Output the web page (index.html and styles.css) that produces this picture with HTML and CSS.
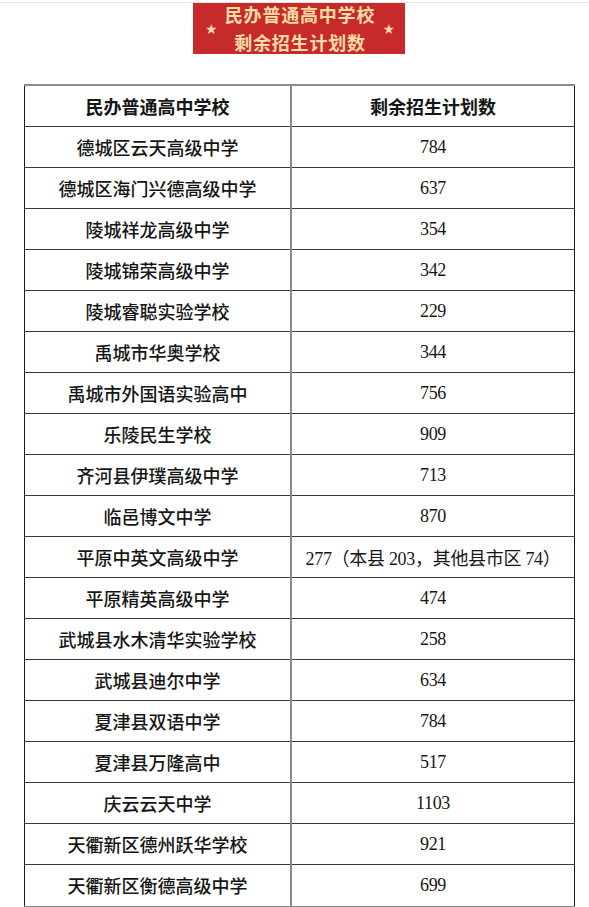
FILE: index.html
```html
<!DOCTYPE html>
<html lang="zh-CN">
<head>
<meta charset="utf-8">
<title>民办普通高中学校剩余招生计划数</title>
<link rel="stylesheet" href="styles.css">
</head>
<body>
<div class="page">
  <div class="topline"></div>
  <div class="banner">
    <span class="star">★</span>
    <div class="banner-text">
      <div>民办普通高中学校</div>
      <div>剩余招生计划数</div>
    </div>
    <span class="star">★</span>
  </div>
  <table class="plan">
    <thead>
      <tr><th class="c1">民办普通高中学校</th><th class="c2">剩余招生计划数</th></tr>
    </thead>
    <tbody>
      <tr><td class="c1">德城区云天高级中学</td><td class="c2">784</td></tr>
      <tr><td class="c1">德城区海门兴德高级中学</td><td class="c2">637</td></tr>
      <tr><td class="c1">陵城祥龙高级中学</td><td class="c2">354</td></tr>
      <tr><td class="c1">陵城锦荣高级中学</td><td class="c2">342</td></tr>
      <tr><td class="c1">陵城睿聪实验学校</td><td class="c2">229</td></tr>
      <tr><td class="c1">禹城市华奥学校</td><td class="c2">344</td></tr>
      <tr><td class="c1">禹城市外国语实验高中</td><td class="c2">756</td></tr>
      <tr><td class="c1">乐陵民生学校</td><td class="c2">909</td></tr>
      <tr><td class="c1">齐河县伊璞高级中学</td><td class="c2">713</td></tr>
      <tr><td class="c1">临邑博文中学</td><td class="c2">870</td></tr>
      <tr><td class="c1">平原中英文高级中学</td><td class="c2">277（本县 203，其他县市区 74）</td></tr>
      <tr><td class="c1">平原精英高级中学</td><td class="c2">474</td></tr>
      <tr><td class="c1">武城县水木清华实验学校</td><td class="c2">258</td></tr>
      <tr><td class="c1">武城县迪尔中学</td><td class="c2">634</td></tr>
      <tr><td class="c1">夏津县双语中学</td><td class="c2">784</td></tr>
      <tr><td class="c1">夏津县万隆高中</td><td class="c2">517</td></tr>
      <tr><td class="c1">庆云云天中学</td><td class="c2">1103</td></tr>
      <tr><td class="c1">天衢新区德州跃华学校</td><td class="c2">921</td></tr>
      <tr><td class="c1">天衢新区衡德高级中学</td><td class="c2">699</td></tr>
    </tbody>
  </table>
  <div class="bottomline"></div>
</div>
</body>
</html>
```
FILE: styles.css
```css
html, body {
  margin: 0;
  padding: 0;
  background: #ffffff;
}

.page {
  width: 589px;
  height: 907px;
  overflow: hidden;
  display: flex;
  flex-direction: column;
  align-items: flex-start;
}

.topline {
  width: 100%;
  height: 1px;
  margin-top: 2px;
  background: #e4e4e4;
}

.banner {
  margin: 0 0 0 193px;
  width: 212px;
  height: 51px;
  background: #c62a2b;
  display: flex;
  align-items: center;
  justify-content: space-between;
  padding: 0 10px 0 12px;
  box-sizing: border-box;
  color: #fbdca4;
}

.star {
  font-family: "DejaVu Sans", sans-serif;
  font-size: 14px;
  line-height: 1;
  color: #f8d9a6;
  margin-top: 2px;
}

.banner-text {
  display: flex;
  flex-direction: column;
  align-items: center;
  font-family: "Noto Sans CJK SC", sans-serif;
  font-weight: 700;
  font-size: 18px;
  letter-spacing: 0.8px;
  line-height: 28px;
  margin-top: -1px;
}

.plan {
  margin: 30px 0 0 24px;
  width: 551px;
  border-collapse: collapse;
  table-layout: fixed;
  color: #161616;
}

.plan th,
.plan td {
  padding: 0;
  text-align: center;
  vertical-align: middle;
  border-bottom: 1px solid #3a3a3a;
  white-space: nowrap;
}

.plan thead tr {
  height: 42px;
}

.plan thead th {
  border-top: 2px solid #8c8c8c;
  font-family: "Noto Sans CJK SC", sans-serif;
  font-weight: 700;
  font-size: 18px;
}

.plan tbody tr {
  height: 41px;
}

.plan .c1 {
  width: 265px;
  border-left: 1px solid #1a1a1a;
  border-right: 2px solid #8a8a8a;
}

.plan .c2 {
  border-right: 1px solid #1a1a1a;
}

.plan td.c1 {
  font-family: "Noto Sans CJK SC", sans-serif;
  font-size: 18px;
  font-weight: 500;
}

.plan td.c2 {
  font-family: "Liberation Serif", "Noto Sans CJK SC", serif;
  font-size: 18px;
  letter-spacing: -0.3px;
}

.plan tbody tr:last-child td {
  border-bottom: none;
}

.bottomline {
  margin-left: 24px;
  width: 551px;
  height: 3px;
  background: #8a8a8a;
}
```
